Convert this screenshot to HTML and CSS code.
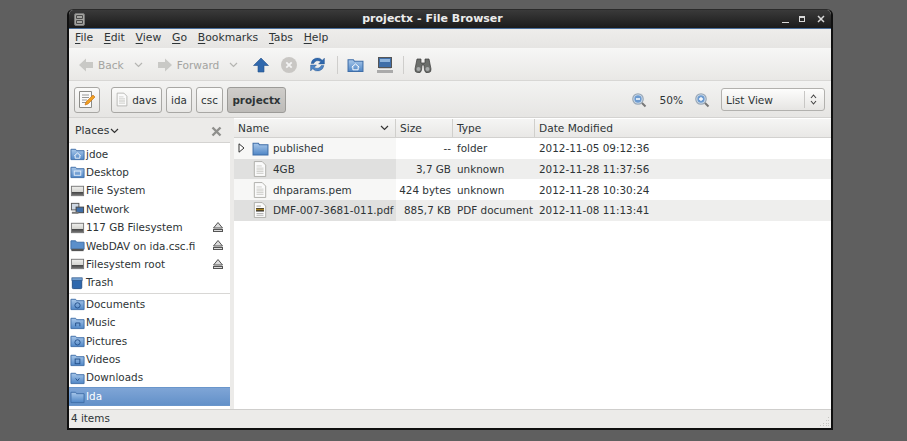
FILE: index.html
```html
<!DOCTYPE html>
<html lang="en">
<head>
<meta charset="utf-8">
<title>projectx - File Browser</title>
<link rel="stylesheet" href="styles.css">
</head>
<body>
<svg class="defs" width="0" height="0">
  <defs>
    <linearGradient id="fb" x1="0" y1="0" x2="0" y2="1"><stop offset="0" stop-color="#a9c8ea"/><stop offset="1" stop-color="#4f86c6"/></linearGradient>
    <linearGradient id="fd" x1="0" y1="0" x2="0" y2="1"><stop offset="0" stop-color="#f0f0ee"/><stop offset="0.6" stop-color="#d4d4d0"/><stop offset="0.62" stop-color="#444"/><stop offset="1" stop-color="#777"/></linearGradient>
    <symbol id="folder" viewBox="0 0 16 16"><path d="M1 3.500h5l1 1.500h8v9.500H1z" fill="url(#fb)" stroke="#3f6ea8"/></symbol>
    <symbol id="folderhome" viewBox="0 0 16 16"><path d="M1 3.500h5l1 1.500h8v9.500H1z" fill="url(#fb)" stroke="#3f6ea8"/><path d="M4.500 10.500L8 7.500l3.500 3M5.500 10v3h5v-3" fill="none" stroke="#fff" stroke-width=".9"/></symbol>
    <symbol id="folderdesk" viewBox="0 0 16 16"><path d="M1 3.500h5l1 1.500h8v9.500H1z" fill="url(#fb)" stroke="#3f6ea8"/><rect x="4.500" y="7.500" width="7" height="4.500" fill="none" stroke="#e6f0fa"/></symbol>
    <symbol id="folderdoc" viewBox="0 0 16 16"><path d="M1 3.500h5l1 1.500h8v9.500H1z" fill="url(#fb)" stroke="#3f6ea8"/><circle cx="8" cy="10" r="2.800" fill="none" stroke="#24508a"/></symbol>
    <symbol id="foldermusic" viewBox="0 0 16 16"><path d="M1 3.500h5l1 1.500h8v9.500H1z" fill="url(#fb)" stroke="#3f6ea8"/><path d="M6 12V8.500h4.500V12" fill="none" stroke="#24508a"/></symbol>
    <symbol id="foldervid" viewBox="0 0 16 16"><path d="M1 3.500h5l1 1.500h8v9.500H1z" fill="url(#fb)" stroke="#3f6ea8"/><rect x="5.500" y="7.500" width="5" height="5" fill="none" stroke="#24508a"/></symbol>
    <symbol id="folderdown" viewBox="0 0 16 16"><path d="M1 3.500h5l1 1.500h8v9.500H1z" fill="url(#fb)" stroke="#3f6ea8"/><path d="M6 9l2 2.500L10 9" fill="none" stroke="#24508a"/></symbol>
    <symbol id="drive" viewBox="0 0 16 16"><rect x="1.500" y="3.500" width="13" height="10" fill="url(#fd)" stroke="#777"/></symbol>
    <symbol id="network" viewBox="0 0 16 16"><rect x="1.500" y="2.500" width="8" height="7" fill="#cfd8e3" stroke="#555"/><rect x="6.500" y="6.500" width="8" height="6" fill="#3f6ea8" stroke="#444"/><path d="M2 12.500h7" stroke="#777" stroke-width="2"/></symbol>
    <symbol id="davdrive" viewBox="0 0 16 16"><path d="M1 3h5l1 1.500h8V12H1z" fill="#5b8fcb" stroke="#3f6ea8"/><rect x="1.500" y="11.500" width="13" height="2.500" fill="#555"/></symbol>
    <symbol id="trash" viewBox="0 0 16 16"><rect x="2.500" y="4.500" width="10" height="10" rx="1" fill="#2f68ad" stroke="#234f86"/><rect x="2" y="3" width="11" height="3" fill="#74a0d0" stroke="#234f86" stroke-width=".7"/></symbol>
    <symbol id="eject" viewBox="0 0 12 12"><path d="M6 1.500L10.500 7h-9z" fill="#dcdcdc" stroke="#555"/><rect x="1.500" y="8.500" width="9" height="2" fill="#dcdcdc" stroke="#555"/></symbol>
    <symbol id="doc" viewBox="0 0 16 20"><path d="M1.500 1.500h9l4 4v13h-13z" fill="#fafafa" stroke="#a8a8a4"/><path d="M4 6.500h6M4 9h8M4 11h8M4 13h8M4 15h8" stroke="#c8c8c4"/></symbol>
    <symbol id="pdf" viewBox="0 0 16 20"><path d="M1.500 1.500h9l4 4v13h-13z" fill="#fafafa" stroke="#a8a8a4"/><path d="M4 5.500h5" stroke="#999"/><rect x="3.500" y="8" width="9" height="3" fill="#d9a520"/><path d="M3.500 8.500h9M3.500 11h9" stroke="#222" stroke-width="1.200"/><path d="M4 14h8M4 16h8" stroke="#aaa"/></symbol>
    <symbol id="lens" viewBox="0 0 16 16"><circle cx="7" cy="7" r="5.200" fill="#dbe6f2" stroke="#9aa9b8" stroke-width="1.300"/><path d="M11 11l3.500 3.500" stroke="#777" stroke-width="2"/></symbol>
  </defs>
</svg>

<main class="window">
  <header class="titlebar">
    <svg class="winicon" width="11" height="13" viewBox="0 0 11 13"><rect x=".5" y=".5" width="10" height="12" rx="1.500" fill="#a5a5a1" stroke="#777"/><path d="M2.500 2.500h6v3h-6zM2.500 7.500h6v3h-6z" fill="none" stroke="#4a4a4a"/></svg>
    <h1 class="wintitle">projectx - File Browser</h1>
    <div class="winbtns">
      <span class="wb wb-min"></span><span class="wb wb-max"></span>
      <svg class="wb-close" width="8" height="8" viewBox="0 0 8 8"><path d="M1 1l6 6M7 1L1 7" stroke="#d8d8d8" stroke-width="1.500"/></svg>
    </div>
  </header>

  <nav class="menubar">
    <span class="menu"><u>F</u>ile</span><span class="menu"><u>E</u>dit</span><span class="menu"><u>V</u>iew</span><span class="menu"><u>G</u>o</span><span class="menu"><u>B</u>ookmarks</span><span class="menu"><u>T</u>abs</span><span class="menu"><u>H</u>elp</span>
  </nav>

  <div class="toolbar">
    <span class="tool dim">
      <svg width="16" height="14" viewBox="0 0 16 14"><path d="M8 0.500L1 7l7 6.500V10h7V4H8z" fill="#c9c9c6"/></svg>
      <span class="tool-label">Back</span>
    </span>
    <svg class="chev" width="9" height="6" viewBox="0 0 9 6"><path d="M1 1l3.500 3.500L8 1" fill="none" stroke="#b5b5b2" stroke-width="1.200"/></svg>
    <span class="tool dim tool-fwd">
      <svg width="16" height="14" viewBox="0 0 16 14"><path d="M8 0.500L15 7l-7 6.500V10H1V4h7z" fill="#c9c9c6"/></svg>
      <span class="tool-label">Forward</span>
    </span>
    <svg class="chev" width="9" height="6" viewBox="0 0 9 6"><path d="M1 1l3.500 3.500L8 1" fill="none" stroke="#b5b5b2" stroke-width="1.200"/></svg>
    <svg class="ti ti-up" width="16" height="16" viewBox="0 0 16 16"><path d="M8 1L15.500 8.500H11V15H5V8.500H.5z" fill="#2f68ad" stroke="#24508a" stroke-width=".6"/></svg>
    <svg class="ti ti-stop" width="18" height="18" viewBox="0 0 18 18"><circle cx="9" cy="9" r="8" fill="#c9c7c4"/><path d="M6.300 6.300l5.400 5.400M11.700 6.300l-5.400 5.400" stroke="#f4f4f4" stroke-width="1.800"/></svg>
    <svg class="ti ti-reload" width="17" height="17" viewBox="0 0 16 16"><path d="M2 7a6 6 0 0 1 10.500-3L14.500 2v5.500H9l2-2A4 4 0 0 0 4.500 7z" fill="#2f68ad" stroke="#24508a" stroke-width=".4"/><path d="M14 9a6 6 0 0 1-10.500 3L1.500 14V8.500H7l-2 2A4 4 0 0 0 11.500 9z" fill="#4f86c6" stroke="#24508a" stroke-width=".4"/></svg>
    <span class="tsep tsep-a"></span>
    <svg class="ti ti-home" width="17" height="17"><use href="#folderhome"/></svg>
    <svg class="ti ti-comp" width="18" height="18" viewBox="0 0 18 18"><rect x="2.500" y="1.500" width="13" height="10" fill="#3f6ea8" stroke="#555"/><rect x="4" y="3" width="10" height="3" fill="#8fb4dc"/><path d="M1 15.500h16" stroke="#aaa" stroke-width="3"/><path d="M3 12.500h12" stroke="#ccc"/></svg>
    <span class="tsep tsep-b"></span>
    <svg class="ti ti-find" width="18" height="16" viewBox="0 0 18 16"><path d="M3 2h4v4h4V2h4l2 10a3 3 0 0 1-6.500 1L10 8H8l-.5 5A3 3 0 0 1 1 12z" fill="#6c6f6c" stroke="#3c3c3c" stroke-width=".7"/><circle cx="4.500" cy="12" r="2" fill="#a8abab"/><circle cx="13.500" cy="12" r="2" fill="#a8abab"/></svg>
  </div>

  <div class="locbar">
    <button class="pbtn pbtn-edit">
      <svg width="18" height="19" viewBox="0 0 18 19"><path d="M1.500 1.500h12v16h-12z" fill="#fbfbfb" stroke="#8b8b87"/><path d="M4 5h7M4 7.500h7M4 10h5M4 12.500h4" stroke="#999"/><path d="M7 15l1-3 7-7 2 2-7 7z" fill="#f0a020" stroke="#c46a10" stroke-width=".6"/></svg>
    </button>
    <button class="pbtn pbtn-davs">
      <svg width="12" height="15" viewBox="0 0 16 20"><use href="#doc"/></svg>
      <span>davs</span>
    </button>
    <button class="pbtn pbtn-ida">ida</button>
    <button class="pbtn pbtn-csc">csc</button>
    <button class="pbtn pbtn-cur">projectx</button>
    <div class="zoomgrp">
      <svg width="16" height="16"><use href="#lens"/><circle cx="7" cy="7" r="3.700" fill="#6d9bd0"/><path d="M5 7h4" stroke="#fff" stroke-width="1.300"/></svg>
      <span class="zoomval">50%</span>
      <svg width="16" height="16"><use href="#lens"/><circle cx="7" cy="7" r="3.700" fill="#6d9bd0"/><path d="M5 7h4M7 5v4" stroke="#fff" stroke-width="1.300"/></svg>
    </div>
    <div class="combo">
      <span class="combo-val">List View</span>
      <span class="combo-sep"></span>
      <svg width="7" height="11" viewBox="0 0 7 11"><path d="M1 4l2.500-3L6 4M1 7l2.500 3L6 7" fill="none" stroke="#444" stroke-width="1.100"/></svg>
    </div>
  </div>

  <div class="panes">
    <aside class="sidebar">
      <div class="sidehead">
        <span class="sidehead-title">Places</span>
        <svg class="sidehead-chev" width="9" height="6" viewBox="0 0 9 6"><path d="M1 1l3.500 3.500L8 1" fill="none" stroke="#333" stroke-width="1.200"/></svg>
        <svg class="sidehead-x" width="11" height="11" viewBox="0 0 11 11"><path d="M1.500 1.500l8 8M9.500 1.500l-8 8" stroke="#8f8f8c" stroke-width="2.400"/></svg>
      </div>
      <ul class="places">
        <li class="place"><svg width="15" height="15"><use href="#folderhome"/></svg><span>jdoe</span></li>
        <li class="place"><svg width="15" height="15"><use href="#folderdesk"/></svg><span>Desktop</span></li>
        <li class="place"><svg width="15" height="15"><use href="#drive"/></svg><span>File System</span></li>
        <li class="place"><svg width="15" height="15"><use href="#network"/></svg><span>Network</span></li>
        <li class="place"><svg width="15" height="15"><use href="#drive"/></svg><span>117 GB Filesystem</span><svg class="eject" width="12" height="12"><use href="#eject"/></svg></li>
        <li class="place"><svg width="15" height="15"><use href="#davdrive"/></svg><span>WebDAV on ida.csc.fi</span><svg class="eject" width="12" height="12"><use href="#eject"/></svg></li>
        <li class="place"><svg width="15" height="15"><use href="#drive"/></svg><span>Filesystem root</span><svg class="eject" width="12" height="12"><use href="#eject"/></svg></li>
        <li class="place"><svg width="15" height="15"><use href="#trash"/></svg><span>Trash</span></li>
        <li class="place-sep"></li>
        <li class="place"><svg width="15" height="15"><use href="#folderdoc"/></svg><span>Documents</span></li>
        <li class="place"><svg width="15" height="15"><use href="#foldermusic"/></svg><span>Music</span></li>
        <li class="place"><svg width="15" height="15"><use href="#folderdoc"/></svg><span>Pictures</span></li>
        <li class="place"><svg width="15" height="15"><use href="#foldervid"/></svg><span>Videos</span></li>
        <li class="place"><svg width="15" height="15"><use href="#folderdown"/></svg><span>Downloads</span></li>
        <li class="place place-sel"><svg width="15" height="15"><use href="#folder"/></svg><span>Ida</span></li>
      </ul>
    </aside>
    <div class="grip"></div>
    <section class="files">
      <div class="fhead">
        <div class="fh fh-name"><span>Name</span><svg width="9" height="6" viewBox="0 0 9 6"><path d="M1 1l3.500 3.500L8 1" fill="none" stroke="#333" stroke-width="1.200"/></svg></div>
        <div class="fh fh-size">Size</div>
        <div class="fh fh-type">Type</div>
        <div class="fh fh-date">Date Modified</div>
      </div>
      <div class="frow">
        <div class="fc fc-name"><svg class="expander" width="7" height="10" viewBox="0 0 7 10"><path d="M1 .8L6 5 1 9.200z" fill="#fff" stroke="#333"/></svg><svg class="ficon ficon-folder" width="17" height="18"><use href="#folder"/></svg><span>published</span></div>
        <div class="fc fc-size">--</div><div class="fc fc-type">folder</div><div class="fc fc-date">2012-11-05 09:12:36</div>
      </div>
      <div class="frow frow-alt">
        <div class="fc fc-name"><svg class="ficon" width="14" height="18"><use href="#doc"/></svg><span>4GB</span></div>
        <div class="fc fc-size">3,7 GB</div><div class="fc fc-type">unknown</div><div class="fc fc-date">2012-11-28 11:37:56</div>
      </div>
      <div class="frow">
        <div class="fc fc-name"><svg class="ficon" width="14" height="18"><use href="#doc"/></svg><span>dhparams.pem</span></div>
        <div class="fc fc-size">424 bytes</div><div class="fc fc-type">unknown</div><div class="fc fc-date">2012-11-28 10:30:24</div>
      </div>
      <div class="frow frow-alt">
        <div class="fc fc-name"><svg class="ficon" width="14" height="18"><use href="#pdf"/></svg><span>DMF-007-3681-011.pdf</span></div>
        <div class="fc fc-size">885,7 KB</div><div class="fc fc-type">PDF document</div><div class="fc fc-date">2012-11-08 11:13:41</div>
      </div>
    </section>
  </div>

  <footer class="status">
    <span>4 items</span>
    <svg class="resize" width="10" height="10" viewBox="0 0 10 10"><g fill="#c4c4c0"><rect x="8" y="0" width="1" height="1"/><rect x="6" y="3" width="1" height="1"/><rect x="8" y="3" width="1" height="1"/><rect x="3" y="6" width="1" height="1"/><rect x="6" y="6" width="1" height="1"/><rect x="8" y="6" width="1" height="1"/><rect x="0" y="8" width="1" height="1"/><rect x="3" y="8" width="1" height="1"/><rect x="6" y="8" width="1" height="1"/><rect x="8" y="8" width="1" height="1"/></g></svg>
  </footer>
</main>
</body>
</html>
```
FILE: styles.css
```css
* { box-sizing: border-box; }
html, body { margin: 0; height: 100%; }
body {
  background: #5f5f5f;
  padding: 9px 0 0 67px;
  font: 10.4px/14px "DejaVu Sans", sans-serif;
  color: #2e3436;
  overflow: hidden;
}
.defs { position: absolute; }
svg { display: block; flex: none; }

.window {
  width: 766px;
  height: 421px;
  display: flex;
  flex-direction: column;
  background: #ecebe9;
  border: 1px solid #101010;
  border-top-color: #2a2a2a;
  border-radius: 6px 6px 0 0;
  border-width: 1px 2px 2px 2px;
  overflow: hidden;
}

.titlebar {
  height: 19px;
  flex: none;
  display: flex;
  align-items: center;
  position: relative;
  padding: 0 6px 0 5px;
  background: linear-gradient(#3a3a3a, #1b1b1b);
  border-bottom: 1px solid #4a6f9c;
}
.wintitle {
  flex: 1;
  margin: 0;
  padding-right: 2px;
  text-align: center;
  font: bold 11px/14px "DejaVu Sans", sans-serif;
  color: #ececec;
}
.winbtns { display: flex; align-items: center; gap: 8px; }
.wb { display: block; width: 7px; height: 7px; }
.wb-min { border-bottom: 1px solid #d8d8d8; }
.wb-max { width: 6px; height: 6px; border: 1px solid #d8d8d8; border-top-width: 2px; margin-left: 2px; }
.wb-close { margin-left: 4px; }

.menubar {
  height: 20px;
  flex: none;
  display: flex;
  align-items: center;
  gap: 10.8px;
  padding: 0 0 1px 6px;
  font-size: 10.8px;
  background: linear-gradient(#eeedeb, #e6e5e3);
  border-bottom: 1px solid #f7f7f6;
}
.menu u { text-underline-offset: 2px; }

.toolbar {
  height: 32px;
  flex: none;
  display: flex;
  align-items: center;
  padding: 0 0 0 9px;
  background: linear-gradient(#f6f6f5, #e9e8e6);
  border-bottom: 1px solid #d8d7d5;
}
.tool { display: flex; align-items: center; gap: 4px; font-size: 10.6px; }
.tool-fwd { margin-left: 14px; }
.dim { color: #a3a3a0; }
.chev { margin-left: 10px; }
.ti-up { margin-left: 15px; }
.ti-stop { margin-left: 11px; }
.ti-reload { margin-left: 11px; }
.tsep { width: 1px; height: 18px; background: #cfcecc; }
.tsep-a { margin-left: 11px; }
.ti-home { margin-left: 9px; }
.ti-comp { margin-left: 12px; }
.tsep-b { margin-left: 9px; }
.ti-find { margin-left: 10px; }

.locbar {
  height: 36px;
  flex: none;
  display: flex;
  align-items: center;
  padding: 1px 6px 0 5px;
  background: linear-gradient(#f3f3f2, #e6e5e3);
}
.pbtn {
  height: 26px;
  display: flex;
  align-items: center;
  justify-content: center;
  gap: 4px;
  margin-right: 4px;
  padding: 0;
  border: 1px solid #a8a7a4;
  border-radius: 3px;
  background: linear-gradient(#fbfbfa, #e8e7e5);
  font: 10.4px/14px "DejaVu Sans", sans-serif;
  color: #2e3436;
}
.pbtn-edit { width: 26px; margin-right: 11px; }
.pbtn-davs { width: 51px; }
.pbtn-ida { width: 26px; }
.pbtn-csc { width: 27px; }
.pbtn-cur { width: 59px; font-weight: bold; background: linear-gradient(#cfcdca, #bdbbb8); border-color: #9c9b98; margin-right: 0; }
.zoomgrp { margin-left: auto; display: flex; align-items: center; }
.zoomval { margin: 0 11px 0 12px; font-size: 10.6px; }
.combo {
  width: 104px;
  height: 23px;
  margin-left: 11px;
  display: flex;
  align-items: center;
  padding: 0 7px 0 4px;
  border: 1px solid #b2b1ae;
  border-radius: 3px;
  background: linear-gradient(#fdfdfc, #e6e5e3);
}
.combo-val { flex: 1; font-size: 10.6px; }
.combo-sep { width: 1px; height: 17px; background: #c8c7c5; margin-right: 5px; }

.panes { flex: 1; min-height: 0; display: flex; background: #ecebe9; border-top: 1px solid #d4d3d1; }

.sidebar { width: 161px; flex: none; display: flex; flex-direction: column; background: #fff; }
.sidehead {
  height: 25px;
  flex: none;
  display: flex;
  align-items: center;
  padding: 2px 8px 0 6px;
  background: #ecebe9;
  border-bottom: 1px solid #d4d3d1;
}
.sidehead-title { margin-right: 1px; font-size: 10.8px; }
.sidehead-x { margin-left: auto; }
.places { list-style: none; margin: 1.400px 0 0; padding: 0; flex: 1; min-height: 0; }
.place { height: 18.4px; display: flex; align-items: center; gap: 1px; padding-left: 1px; position: relative; }
.eject { position: absolute; right: 6px; top: 3px; }
.place-sep { height: 1px; margin: 1.400px 0 .8px; background: #d8d7d5; }
.place-sel { height: 19.500px; color: #fff; background: linear-gradient(#7fa5d6, #6391c9); border: 1px solid #6a96cb; border-width: 1px 0; }

.grip {
  width: 4px;
  flex: none;
  background: #ecebe9;
  background-image: radial-gradient(#bdbcb9 .5px, transparent .6px);
  background-size: 2px 2px;
  background-position: center;
  background-repeat: repeat-y;
  background-clip: content-box;
  padding: 106px 0 114px;
}

.files { flex: 1; min-width: 0; background: #fff; }
.fhead {
  height: 19px;
  margin-top: 1px;
  display: flex;
  font-size: 10.6px;
  background: linear-gradient(#f5f5f4, #e9e8e6);
  border-bottom: 1px solid #d2d1cf;
}
.fh { display: flex; align-items: center; justify-content: space-between; padding: 0 4px; border-right: 1px solid #d0cfcc; }
.fh-name { width: 162px; padding-right: 6px; }
.fh-size { width: 57px; }
.fh-type { width: 82px; }
.fh-date { flex: 1; border-right: none; }

.frow { height: 20.7px; display: flex; align-items: center; }
.frow-alt { background: #eeeeed; }
.fc { height: 100%; display: flex; align-items: center; white-space: nowrap; }
.fc-name { width: 162px; padding-left: 19px; background: #f7f7f6; position: relative; }
.frow-alt .fc-name { background: #e0e0df; }
.fc-size { width: 57px; justify-content: flex-end; padding-right: 2px; }
.fc-type { width: 82px; padding-left: 4px; }
.fc-date { flex: 1; padding-left: 4px; }
.expander { position: absolute; left: 4px; top: 5px; }
.ficon { margin-right: 6px; }
.ficon-folder { margin: 0 4px 0 -1px; }

.status {
  height: 19px;
  flex: none;
  display: flex;
  align-items: center;
  justify-content: space-between;
  padding: 0 0 2px 2px;
  background: #ecebe9;
  border-top: 1px solid #cfcecc;
}
.resize { align-self: flex-end; margin: 0 1px -1px 0; }
```
